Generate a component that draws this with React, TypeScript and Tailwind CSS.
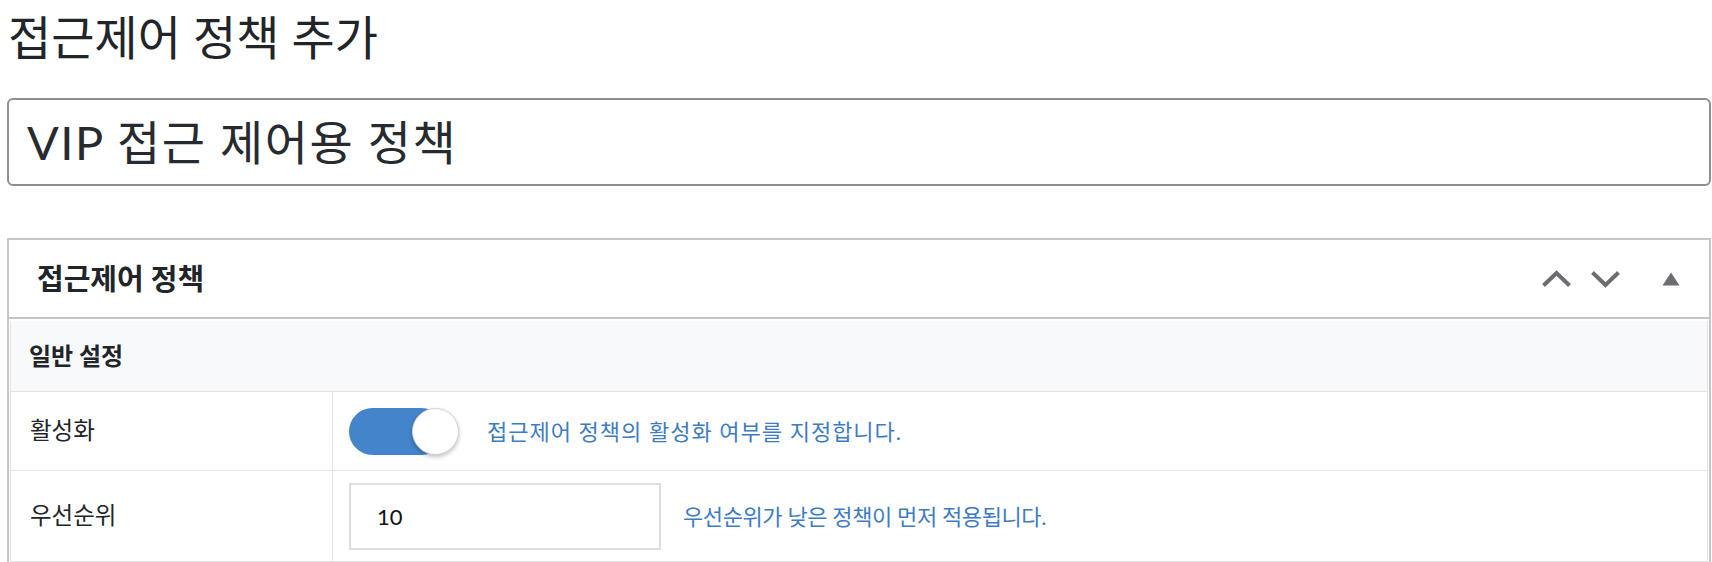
import React from 'react';

const font = { fontFamily: 'Lato, "Noto Sans CJK KR", sans-serif' };

function ChevronUp() {
  return (
    <svg width="31" height="18" viewBox="0 0 31 18" fill="none">
      <path d="M2.5 15.5 L15.5 3 L28.5 15.5" stroke="#6c6d71" strokeWidth="4" strokeLinejoin="miter" />
    </svg>
  );
}

function ChevronDown() {
  return (
    <svg width="31" height="18" viewBox="0 0 31 18" fill="none">
      <path d="M2.5 2.5 L15.5 15 L28.5 2.5" stroke="#6c6d71" strokeWidth="4" strokeLinejoin="miter" />
    </svg>
  );
}

function Caret() {
  return (
    <svg width="18" height="14" viewBox="0 0 18 14">
      <polygon points="9,0.5 17.5,13.5 0.5,13.5" fill="#6c6d71" />
    </svg>
  );
}

function Toggle() {
  return (
    <div className="relative w-[110px] h-[47px] shrink-0">
      <div className="absolute left-0 top-0 h-[47px] w-[96px] rounded-full bg-[#4384cb]" />
      <div className="absolute right-0 top-0 h-[47px] w-[47px] rounded-full bg-white border border-[#d4d4d4] shadow-[0_2px_4px_rgba(0,0,0,0.25)]" />
    </div>
  );
}

export default function App() {
  return (
    <div className="w-[1712px] h-[562px] overflow-hidden bg-white pl-[7px] pr-[1px] text-[#212529]" style={font}>
      {/* Page title */}
      <h1 className="h-[74px] flex items-center pl-[1px] text-[47px] leading-none font-normal">
        접근제어 정책 추가
      </h1>

      {/* Name input */}
      <div className="mt-[24px] h-[88px] flex items-center rounded-[6px] border-2 border-[#8e8e93] pl-[18px] text-[47px] leading-none tracking-[1.5px] text-[#272b30]">
        VIP 접근 제어용 정책
      </div>

      {/* Panel */}
      <div className="mt-[52px] border-2 border-[#c6c6c9]">
        <div className="h-[79px] flex items-center justify-between pl-[28px] pr-[29px] border-b-2 border-[#c6c6c9]">
          <h2 className="text-[29px] font-bold leading-none">접근제어 정책</h2>
          <div className="flex items-center">
            <ChevronUp />
            <div className="w-[18px]" />
            <ChevronDown />
            <div className="w-[41px]" />
            <Caret />
          </div>
        </div>

        <div className="mx-[1px] mt-[2px] border-x border-[#e3e3e3]">
          {/* Section heading */}
          <div className="h-[71px] flex items-center pl-[18px] bg-[#f8f9fa] border-b border-[#e3e3e3] text-[24px] font-bold">
            일반 설정
          </div>

          {/* Row: 활성화 */}
          <div className="flex h-[79px] border-b border-[#e3e3e3]">
            <div className="w-[322px] shrink-0 flex items-center pl-[19px] border-r border-[#e3e3e3] text-[23.5px]">
              활성화
            </div>
            <div className="flex items-center pl-[16px] gap-[28px]">
              <Toggle />
              <span className="text-[22px] tracking-[1px] text-[#3d7cc4]">접근제어 정책의 활성화 여부를 지정합니다.</span>
            </div>
          </div>

          {/* Row: 우선순위 */}
          <div className="flex h-[91px] border-b border-[#e3e3e3]">
            <div className="w-[322px] shrink-0 flex items-center pl-[19px] border-r border-[#e3e3e3] text-[23.5px]">
              우선순위
            </div>
            <div className="flex items-center pl-[16px] gap-[22px]">
              <div className="w-[312px] h-[67px] flex items-center pl-[26px] border-2 border-[#dedede] text-[22px] text-[#111]">
                10
              </div>
              <span className="text-[22px] tracking-[-0.4px] text-[#3d7cc4]">우선순위가 낮은 정책이 먼저 적용됩니다.</span>
            </div>
          </div>
        </div>
      </div>
    </div>
  );
}
